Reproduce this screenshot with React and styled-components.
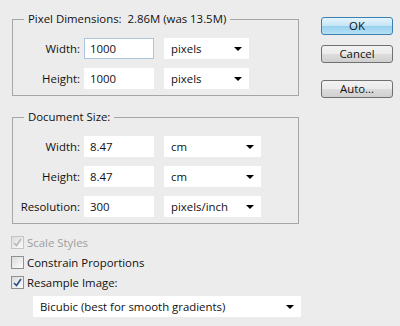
import React from "react";
import styled, { createGlobalStyle } from "styled-components";

const GlobalStyle = createGlobalStyle`
  html, body {
    margin: 0;
    padding: 0;
    background: #ececec;
  }
  body {
    font-family: "Open Sans", "Noto Sans", sans-serif;
    font-size: 11.4px;
    color: #111;
  }
`;

const Dialog = styled.div`
  width: 400px;
  height: 326px;
  box-sizing: border-box;
  background: #ececec;
  display: flex;
  padding: 0 10px 0 12px;
`;

const Main = styled.div`
  width: 290px;
  display: flex;
  flex-direction: column;
`;

const Side = styled.div`
  display: flex;
  flex-direction: column;
  margin-left: 20px;
  padding-top: 17px;
`;

const Group = styled.fieldset`
  margin: ${(p) => p.$top}px 0 0 0;
  width: 287px;
  box-sizing: border-box;
  border: 1px solid #a6a6a6;
  padding: 11px 0 6px 0;
  display: flex;
  flex-direction: column;
  gap: 9px;
`;

const Legend = styled.legend`
  margin-left: 11px;
  padding: 0 4px;
  line-height: 16px;
  white-space: pre;
`;

const Row = styled.div`
  display: flex;
  align-items: center;
`;

const Label = styled.label`
  width: 67px;
  text-align: right;
  margin-right: 4px;
`;

const Input = styled.div`
  width: 70px;
  height: 21px;
  box-sizing: border-box;
  background: #fff;
  border: 1px solid ${(p) => (p.$focus ? "#a9c6de" : "#fff")};
  padding-left: 5px;
  line-height: 19px;
`;

const Select = styled.div`
  width: ${(p) => p.$w}px;
  height: 21px;
  box-sizing: border-box;
  background: #fff;
  margin-left: ${(p) => p.$ml ?? 10}px;
  display: flex;
  align-items: center;
  justify-content: space-between;
  padding: 0 7px 0 7px;
`;

const Arrow = styled.span`
  width: 0;
  height: 0;
  border-left: 4px solid transparent;
  border-right: 4px solid transparent;
  border-top: 4px solid #000;
`;

const Checks = styled.div`
  display: flex;
  flex-direction: column;
  gap: 7px;
  margin-top: 12px;
  margin-left: -1px;
`;

const CheckRow = styled.div`
  display: flex;
  align-items: center;
  height: 13px;
  color: ${(p) => (p.$disabled ? "#9d9d9d" : "#111")};
`;

const Box = styled.span`
  width: 13px;
  height: 13px;
  box-sizing: border-box;
  border: 1px solid ${(p) => (p.$disabled ? "#c4c4c4" : "#8e8f8f")};
  background: linear-gradient(135deg, #dcdcdc, #fbfbfb);
  margin-right: 3px;
  display: flex;
  align-items: center;
  justify-content: center;
`;

const Button = styled.div`
  width: 72px;
  height: 18px;
  box-sizing: border-box;
  border-radius: 3px;
  border: 1px solid ${(p) => (p.$default ? "#3c7fb1" : "#707070")};
  background: ${(p) =>
    p.$default
      ? "linear-gradient(#e5f4fc 0%, #c4e5f6 50%, #98d1ef 51%, #b6e0f5 100%)"
      : "linear-gradient(#f2f2f2 0%, #ebebeb 50%, #dddddd 51%, #cfcfcf 100%)"};
  display: flex;
  align-items: center;
  justify-content: center;
  line-height: 16px;
  margin-top: ${(p) => p.$mt || 0}px;
`;

const Check = ({ color }) => (
  <svg width="9" height="9" viewBox="0 0 9 9">
    <path d="M1 5 L3.5 7.5 L8 1" fill="none" stroke={color} strokeWidth="1.6" />
  </svg>
);

const Checkbox = ({ checked, disabled, children }) => (
  <CheckRow $disabled={disabled}>
    <Box $disabled={disabled}>
      {checked && <Check color={disabled ? "#b8b8b8" : "#2a4d8f"} />}
    </Box>
    {children}
  </CheckRow>
);

const Field = ({ label, value, unit, selW, focus }) => (
  <Row>
    <Label>{label}</Label>
    <Input $focus={focus}>{value}</Input>
    <Select $w={selW}>
      <span>{unit}</span>
      <Arrow />
    </Select>
  </Row>
);

export default function App() {
  return (
    <>
      <GlobalStyle />
      <Dialog>
        <Main>
          <Group $top={11}>
            <Legend>Pixel Dimensions:  2.86M (was 13.5M)</Legend>
            <Field label="Width:" value="1000" unit="pixels" selW={85} focus />
            <Field label="Height:" value="1000" unit="pixels" selW={85} />
          </Group>
          <Group $top={13}>
            <Legend>Document Size:</Legend>
            <Field label="Width:" value="8.47" unit="cm" selW={97} />
            <Field label="Height:" value="8.47" unit="cm" selW={97} />
            <Field label="Resolution:" value="300" unit="pixels/inch" selW={97} />
          </Group>
          <Checks>
            <Checkbox checked disabled>Scale Styles</Checkbox>
            <Checkbox>Constrain Proportions</Checkbox>
            <Checkbox checked>Resample Image:</Checkbox>
          </Checks>
          <Row style={{ marginTop: 7 }}>
            <Select $w={268} $ml={21}>
              <span>Bicubic (best for smooth gradients)</span>
              <Arrow />
            </Select>
          </Row>
        </Main>
        <Side>
          <Button $default>OK</Button>
          <Button $mt={10}>Cancel</Button>
          <Button $mt={17}>Auto...</Button>
        </Side>
      </Dialog>
    </>
  );
}
